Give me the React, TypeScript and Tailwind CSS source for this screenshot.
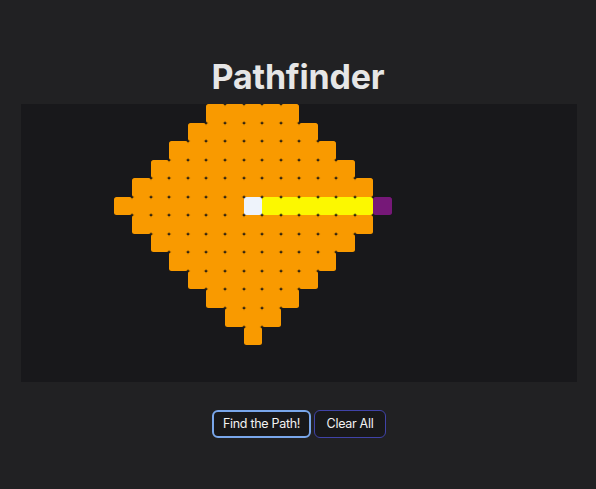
import * as React from "react"

const ROWS = 15
const COLS = 30
const START: [number, number] = [5, 12]
const END: [number, number] = [5, 19]

type CellKind = "empty" | "visited" | "path" | "start" | "end"

function cellKind(r: number, c: number): CellKind {
  if (r === START[0] && c === START[1]) return "start"
  if (r === END[0] && c === END[1]) return "end"
  if (r === START[0] && c > START[1] && c < END[1]) return "path"
  const dist = Math.abs(r - START[0]) + Math.abs(c - START[1])
  if (dist <= 7) return "visited"
  return "empty"
}

const kindClass: Record<CellKind, string> = {
  empty: "bg-[#18181b]",
  visited: "rounded-[2.5px] bg-[#f99a00]",
  path: "rounded-[2.5px] bg-[#fcf800]",
  start: "rounded-[2.5px] bg-[#eef3fb]",
  end: "rounded-[2.5px] bg-[#761878]",
}

function Grid() {
  const cells = []
  for (let r = 0; r < ROWS; r++) {
    for (let c = 0; c < COLS; c++) {
      const kind = cellKind(r, c)
      cells.push(
        <div key={`${r}-${c}`} className={`aspect-square ${kindClass[kind]}`} />
      )
    }
  }
  return (
    <div className="grid w-[556px] grid-cols-[repeat(30,1fr)] bg-[#101012]">
      {cells}
    </div>
  )
}

export default function App() {
  return (
    <div
      className="flex min-h-[489px] w-full flex-col items-center bg-[#212123] pt-[57px]"
      style={{ fontFamily: "Inter, 'Liberation Sans', sans-serif" }}
    >
      <h1 className="text-[34px] leading-[40px] font-bold tracking-[-0.2px] text-[#e6e6e6]">
        Pathfinder
      </h1>
      <div className="mt-[7px] ml-[2px]">
        <Grid />
      </div>
      <div className="mt-[28px] ml-[2px] flex gap-[3px]">
        <button className="h-[28px] w-[99px] rounded-[6px] border-2 border-[#79a6ea] bg-[#18181a] text-center text-[12.5px] font-normal tracking-[-0.3px] text-[#f2f2f2]">
          Find the Path!
        </button>
        <button className="h-[28px] w-[72px] rounded-[6px] border border-[#4043a8] bg-[#18181a] text-center text-[12.5px] font-normal tracking-[-0.3px] text-[#f2f2f2]">
          Clear All
        </button>
      </div>
    </div>
  )
}
